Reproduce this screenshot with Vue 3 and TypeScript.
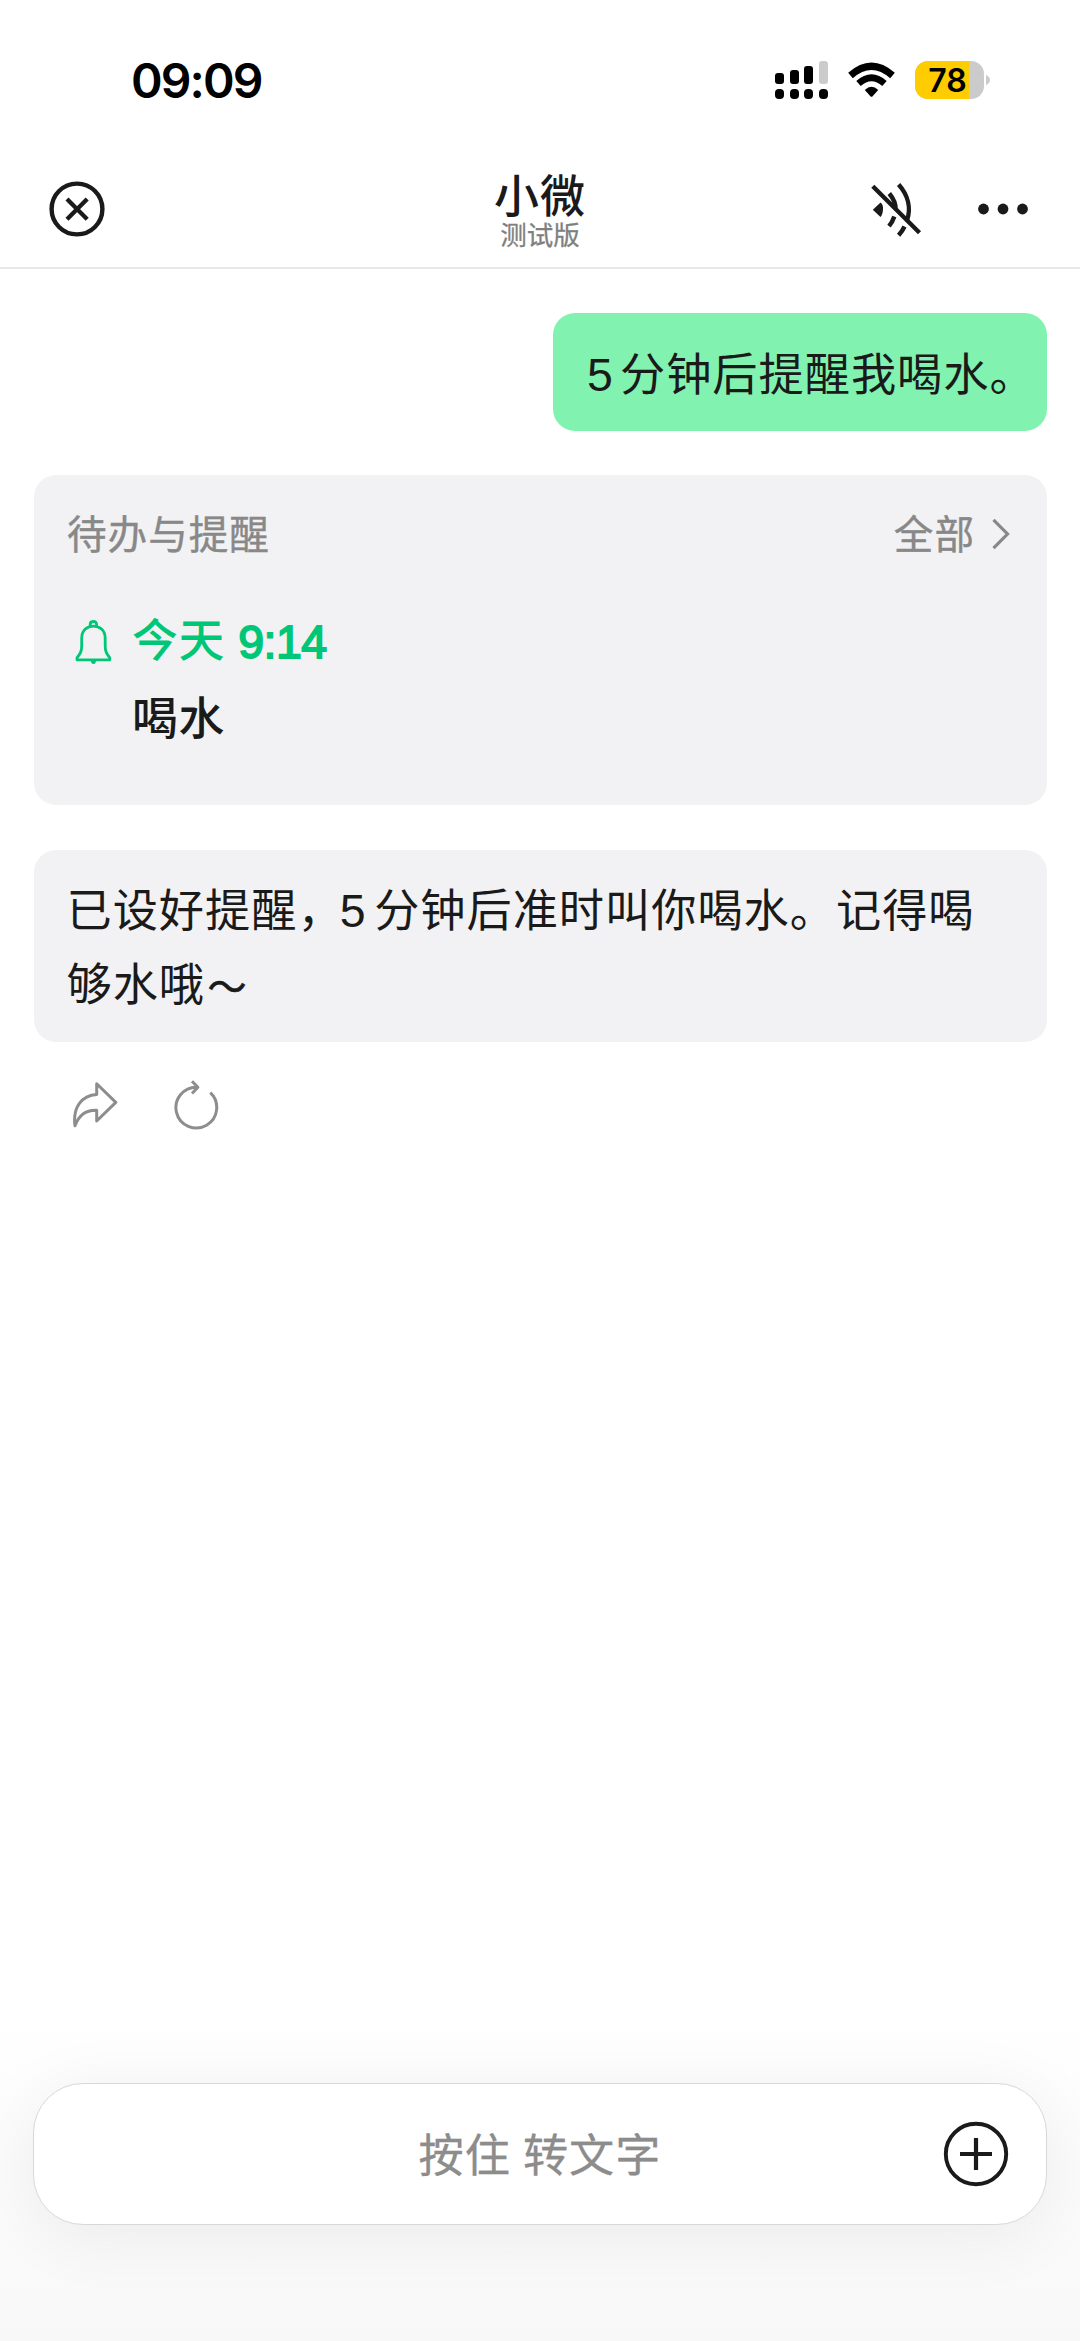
<script setup lang="ts">
interface Reminder {
  time: string
  title: string
}

const clock = '09:09'
const battery = 78
const signalBars: number[] = [11, 14, 18, 23]
const activeBars = 3
const reminder: Reminder = { time: '9:14', title: '喝水' }
</script>

<template>
  <div class="screen">
    <div class="status">
      <span class="clock">{{ clock }}</span>
      <div class="indicators">
        <div class="signal">
          <div v-for="(h, i) in signalBars" :key="i" class="signal-col">
            <i class="bar" :class="{ off: i >= activeBars }" :style="{ height: h + 'px' }"></i>
            <i class="dot"></i>
          </div>
        </div>
        <svg class="wifi" width="48" height="36" viewBox="848 62 48 36">
          <path d="M850.5 75.5Q871.5 57 892.500 75.500" fill="none" stroke="#000" stroke-width="7" />
          <path d="M858.500 83.500Q871.500 72 884.500 83.500" fill="none" stroke="#000" stroke-width="6.600" />
          <path d="M864.800 90Q871.500 83.500 878.200 90L872.600 96.200Q871.500 97.300 870.400 96.200Z" />
        </svg>
        <div class="battery">
          <div class="level" :style="{ width: battery + '%' }"></div>
          <span class="percent">{{ battery }}</span>
        </div>
        <svg class="nub" width="4" height="10" viewBox="0 0 4 10"><path d="M0 0Q4 2 4 5T0 10Z" fill="#cbcbcb" /></svg>
      </div>
    </div>

    <header class="header">
      <svg class="close" width="56" height="56" viewBox="0 0 56 56" fill="none" stroke="#1a1a1a">
        <circle cx="28" cy="28" r="25.400" stroke-width="4.400" />
        <path d="M18 18L38.200 38.200M38.200 18L18 38.200" stroke-width="4.300" />
      </svg>
      <div class="titles">
        <div class="title">小微</div>
        <div class="subtitle">测试版</div>
      </div>
      <div class="actions">
        <svg width="56" height="56" viewBox="868 180 56 56" fill="none" stroke="#1a1a1a" stroke-width="4.400">
          <path d="M872.800 208.700L880.500 201.500Q883.400 203.500 883 208.700T880.500 216Z" fill="#1a1a1a" stroke="none" />
          <path d="M889.300 192.500Q895.800 200.500 895.600 208" />
          <path d="M894.300 215.500Q892.500 221 889 225.200" />
          <path d="M898.600 183.500C908 194 911.300 207 907 219.500" />
          <path d="M904.500 225.500Q902.500 230 898.600 234.300" />
          <path d="M872.800 185.200L919.500 231.800" />
        </svg>
        <svg class="more" width="52" height="12" viewBox="0 0 52 12" fill="#1a1a1a">
          <circle cx="6.500" cy="6" r="5.400" /><circle cx="26" cy="6" r="5.400" /><circle cx="45.500" cy="6" r="5.400" />
        </svg>
      </div>
    </header>

    <main class="chat">
      <div class="bubble sent"><span class="num">5</span>分钟后提醒我喝水。</div>

      <section class="card">
        <div class="card-head">
          <span>待办与提醒</span>
          <span class="all">全部
            <svg width="18" height="32" viewBox="0 0 18 32" fill="none" stroke="#888" stroke-width="3.200"><path d="M1.500 1.800L15.500 16L1.500 30.200" /></svg>
          </span>
        </div>
        <div class="when">
          <svg width="38" height="46" viewBox="74 616 38 46" fill="none" stroke="#00c777" stroke-width="2.800" stroke-linejoin="round">
            <path d="M77 656.800H109.800V654.800C106.500 650.500 105.200 648.500 105.200 643V635.500C105.200 627.500 100 623.200 93.400 623.200S81.700 627.500 81.700 635.500V643C81.700 648.500 80.300 650.500 77 654.800Z" />
            <path d="M90.200 624V621.500Q90.200 618.500 93.400 618.500T96.600 621.500V624" />
            <path d="M90.800 657.500Q91 660.800 93.400 661T96 657.500Z" fill="#00c777" stroke="none" />
          </svg>
          <span class="day">今天</span><span class="time">{{ reminder.time }}</span>
        </div>
        <div class="task">{{ reminder.title }}</div>
      </section>

      <div class="bubble received">已设好提醒，<span class="num">5</span>分钟后准时叫你喝水。记得喝<br />够水哦<span class="tilde">～</span></div>

      <div class="tools">
        <svg width="46" height="50" viewBox="72 1080 46 50" fill="none" stroke="#8d8d8d" stroke-width="3" stroke-linejoin="round">
          <path d="M96.700 1083.800V1094.600C82 1095.500 72.500 1107 75 1125.700C79 1115 86 1109.800 96.700 1110.300V1121L115.800 1102.400Z" />
        </svg>
        <svg width="46" height="50" viewBox="174 1080 46 50" fill="none" stroke="#8d8d8d" stroke-width="3" stroke-linejoin="round">
          <path d="M211.300 1092.700A20.400 20.400 0 1 1 198.500 1087.200" />
          <path d="M193 1081.200L198.900 1087.300L193 1093.500" />
        </svg>
      </div>
    </main>

    <footer class="footer">
      <div class="composer">
        <span class="hold">按住 转文字</span>
        <svg class="plus" width="66" height="66" viewBox="0 0 66 66" fill="none" stroke="#1a1a1a">
          <circle cx="33" cy="33" r="30.200" stroke-width="3.900" />
          <path d="M33 17V49M17 33H49" stroke-width="4.200" />
        </svg>
      </div>
    </footer>
  </div>
</template>

<style>
body { margin: 0; background: #fff; }
</style>

<style scoped>
.screen {
  width: 1080px;
  height: 2341px;
  display: flex;
  flex-direction: column;
  overflow: hidden;
  background: #fff;
  color: #1a1a1a;
  font-family: "Liberation Sans", "Noto Sans CJK SC", sans-serif;
  font-size: 46px;
  line-height: 74px;
  white-space: nowrap;
}
svg { display: block; flex: none; }
.status {
  height: 160px;
  flex: none;
  box-sizing: border-box;
  padding: 0 90px 0 131px;
  display: flex;
  justify-content: space-between;
  align-items: center;
}
.clock {
  padding-top: 1px;
  font: 600 48px/60px Inter, sans-serif;
  letter-spacing: -1.900px;
  color: #000;
}
.indicators { display: flex; align-items: center; }
.signal { display: flex; gap: 5.700px; height: 38px; }
.signal-col { display: flex; flex-direction: column; justify-content: flex-end; gap: 5px; }
.signal-col i { display: block; width: 9px; border-radius: 3px; background: #000; }
.signal-col .dot { height: 10px; border-radius: 4px; }
.signal-col .off { background: #cbcbcb; }
.wifi { margin-left: 20px; }
.battery {
  position: relative;
  width: 69px;
  height: 38px;
  margin-left: 19px;
  border-radius: 13px;
  overflow: hidden;
  background: #cbcbcb;
}
.level { height: 100%; background: #fc0; }
.percent {
  position: absolute;
  inset: 0;
  padding-right: 4px;
  text-align: center;
  font: 600 32px/39px Inter, sans-serif;
  color: #000;
}
.nub { margin-left: 2px; }
.header {
  height: 109px;
  flex: none;
  box-sizing: border-box;
  padding: 0 49px;
  border-bottom: 2px solid #e8e8e8;
  display: grid;
  grid-template-columns: 1fr auto 1fr;
  align-items: center;
}
.close { margin-top: -10px; }
.titles { text-align: center; margin-top: -2px; }
.title { font-size: 45px; letter-spacing: 1px; font-weight: 500; line-height: 48px; }
.subtitle { margin-top: -1px; font-size: 26.500px; line-height: 30px; color: #7f7f7f; -webkit-text-stroke: .3px currentColor; }
.actions { display: flex; justify-content: flex-end; align-items: center; gap: 53px; margin-top: -10px; }
.more { margin-right: 2px; }
.chat {
  flex: 1;
  padding: 44px 33.500px 0;
  display: flex;
  flex-direction: column;
}
.bubble { border-radius: 22px; box-sizing: border-box; font-size: 45.200px; letter-spacing: 1px; }
.sent {
  align-self: flex-end;
  width: 493.500px;
  height: 118px;
  padding: 26px 0 0 34px;
  background: #82f2b0;
}
.num { display: inline-block; width: 33px; box-sizing: border-box; font-size: 46.500px; line-height: 60px; }
.card {
  height: 330px;
  margin-top: 44px;
  box-sizing: border-box;
  padding: 30px 33.500px 0;
  border-radius: 22px;
  background: #f2f2f4;
}
.card-head {
  display: flex;
  justify-content: space-between;
  font-size: 39.600px;
  letter-spacing: 1px;
  line-height: 60px;
  color: #888;
  -webkit-text-stroke: .4px currentColor;
}
.all { display: flex; align-items: center; gap: 17px; margin-right: 3px; }
.all svg { margin-top: -3px; }
.when {
  margin-top: 38px;
  padding-left: 7px;
  display: flex;
  align-items: center;
  font-size: 45.800px;
  letter-spacing: .8px;
  font-weight: 500;
  line-height: 76px;
  color: #00c777;
}
.day { margin-left: 20px; padding-top: 1px; }
.time {
  margin-left: 13px;
  font-size: 46.500px;
  font-weight: 400;
  letter-spacing: -.5px;
  line-height: 74px;
  -webkit-text-stroke: 1.800px currentColor;
}
.task { padding-left: 65px; margin-top: 1px; font-weight: 500; font-size: 45.800px; letter-spacing: .8px; line-height: 78px; }
.received {
  height: 192px;
  margin-top: 45px;
  padding: 24.500px 33px 0;
  line-height: 74.500px;
  background: #f2f2f4;
}
.received .num { width: 34.500px; margin-left: -4px; }
.tilde { display: inline-block; width: 46px; margin-left: -1px; text-align: center; font-size: 39px; line-height: 60px; letter-spacing: 0; -webkit-text-stroke: .6px currentColor; }
.tools { display: flex; gap: 55px; margin: 38px 0 0 38.500px; }
.footer {
  height: 341px;
  flex: none;
  box-sizing: border-box;
  padding: 83px 33px 0;
  background: linear-gradient(#fff, #fafafa 70%, #f8f8f8);
}
.composer {
  height: 142px;
  box-sizing: border-box;
  padding: 0 37px 0 0;
  border: 1px solid #d8d8d8;
  border-radius: 50px;
  background: #fff;
  box-shadow: 0 10px 70px rgba(0, 0, 0, .065);
  display: grid;
  grid-template-columns: 1fr auto 1fr;
  align-items: center;
}
.hold { grid-column: 2; padding: 6px 0 0 37px; font-size: 45.200px; letter-spacing: 1px; word-spacing: -1.500px; color: #8c8c8c; -webkit-text-stroke: .3px currentColor; }
.plus { justify-self: end; }
</style>
